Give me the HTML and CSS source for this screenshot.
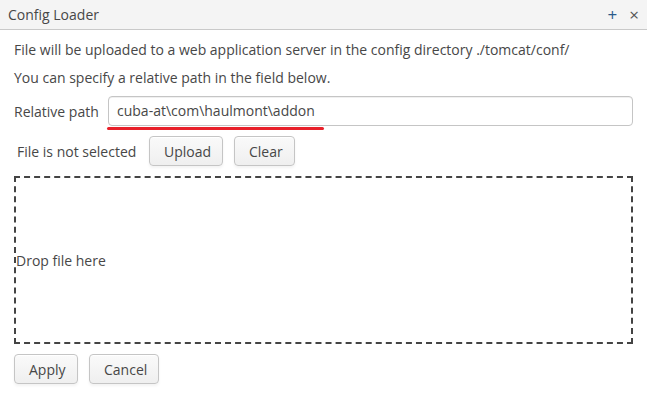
FILE: index.html
```html
<!DOCTYPE html>
<html>
<head>
<meta charset="utf-8">
<link rel="stylesheet" href="styles.css">
</head>
<body>
<div class="window">
  <div class="header">
    <span class="title">Config Loader</span>
    <div class="header-tools">
      <span class="tool plus">+</span>
      <span class="tool close">×</span>
    </div>
  </div>
  <div class="content">
    <div class="line">File will be uploaded to a web application server in the config directory ./tomcat/conf/</div>
    <div class="line">You can specify a relative path in the field below.</div>
    <div class="field-row">
      <label class="field-label">Relative path</label>
      <div class="input-wrap">
        <div class="input">cuba-at\com\haulmont\addon</div>
        <div class="red-mark"></div>
      </div>
    </div>
    <div class="upload-row">
      <span class="status">File is not selected</span>
      <button class="btn btn-upload">Upload</button>
      <button class="btn btn-clear">Clear</button>
    </div>
    <div class="dropzone">Drop file here</div>
    <div class="actions">
      <button class="btn btn-apply">Apply</button>
      <button class="btn btn-cancel">Cancel</button>
    </div>
  </div>
</div>
</body>
</html>
```

FILE: styles.css
```css
* { box-sizing: border-box; }
html, body { margin: 0; padding: 0; background: #fff; }
body {
  font-family: "Open Sans", "DejaVu Sans", sans-serif;
  font-size: 14px;
  color: #474747;
  width: 647px;
  height: 400px;
  overflow: hidden;
}
.window { width: 647px; height: 400px; display: flex; flex-direction: column; }
.header {
  height: 30px;
  background: #f4f4f4;
  border-bottom: 1px solid #c9c9c9;
  display: flex;
  align-items: center;
  padding: 0 8px 0 8px;
}
.title { flex: 1; font-size: 14px; color: #474747; }
.header-tools { display: flex; gap: 12px; align-items: center; }
.tool { font-size: 16px; line-height: 1; color: #3a3a3a; }
.plus { color: #2a5b8a; font-size: 17px; }
.close { color: #555; font-size: 17px; }
.content { padding: 6px 14px 0 14px; display: flex; flex-direction: column; }
.line { height: 28px; line-height: 28px; }
.field-row { display: flex; align-items: center; margin-top: 4px; height: 30px; }
.field-label { width: 94px; flex: none; }
.input-wrap { position: relative; flex: 1; }
.input {
  height: 30px;
  border: 1px solid #c5c5c5;
  border-radius: 4px;
  padding: 0 8px;
  line-height: 28px;
  color: #474747;
  background: #fff;
  box-shadow: inset 0 1px 0 #f0f0f0;
}
.red-mark {
  position: absolute;
  left: -1px;
  top: 31px;
  width: 217px;
  height: 3px;
  background: #e8202a;
  border-radius: 2px;
}
.upload-row { display: flex; align-items: center; margin-top: 10px; height: 30px; }
.status { margin-left: 3px; width: 132px; }
.btn {
  font-family: "Open Sans", "DejaVu Sans", sans-serif;
  font-size: 14px;
  color: #474747;
  height: 30px;
  padding: 0 14px;
  border: 1px solid #c5c5c5;
  border-radius: 4px;
  background: linear-gradient(#fafafa, #efefef);
  box-shadow: 0 2px 3px rgba(0,0,0,0.05), inset 0 1px 0 #fff;
}
.btn-upload { width: 74px; }
.btn-clear { width: 61px; margin-left: 11px; }
.dropzone {
  margin-top: 10px;
  height: 168px;
  border: 2px dashed #444;
  display: flex;
  align-items: center;
  padding-left: 0;
}
.actions { display: flex; gap: 11px; margin-top: 10px; }
.btn-apply { width: 64px; }
.btn-cancel { width: 70px; }
```
